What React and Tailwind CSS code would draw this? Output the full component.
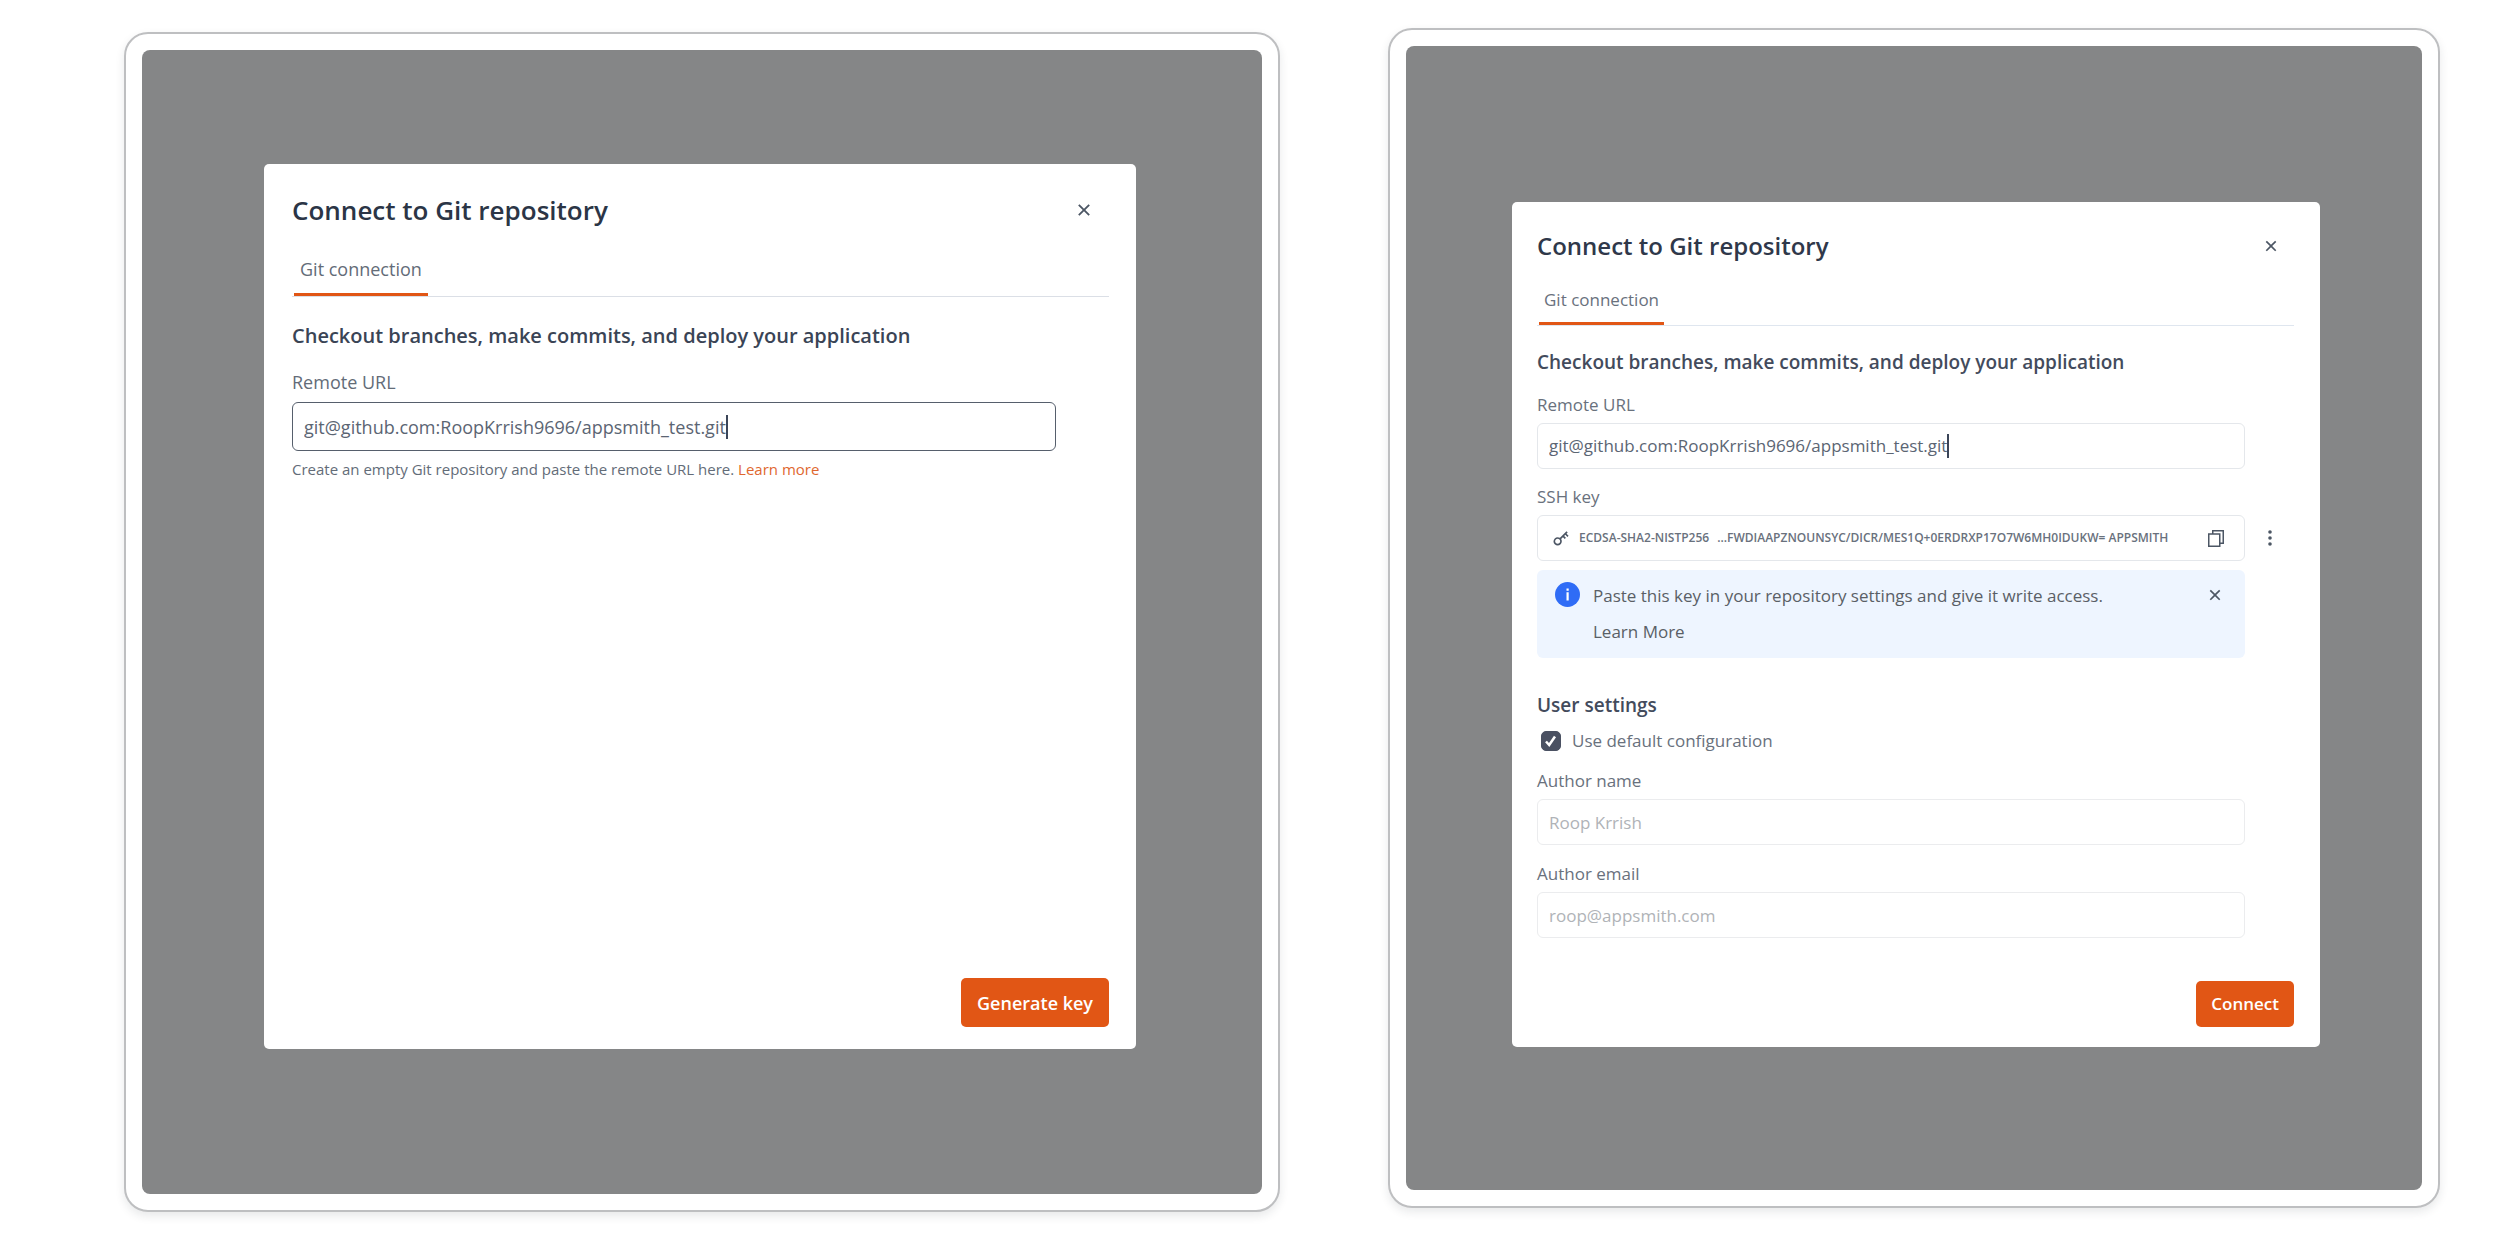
import { RiKey2Line, RiCloseLine } from "react-icons/ri";

function Frame({ className, stageClass, children }) {
  return (
    <section
      className={`rounded-3xl border-2 border-[#bebfc1] bg-white p-4 shadow-[0_4px_10px_rgba(30,35,50,0.10)] ${className}`}
    >
      <div className={`rounded-lg bg-[#858687] ${stageClass}`}>{children}</div>
    </section>
  );
}

function CopyIcon() {
  return (
    <svg viewBox="0 0 16 17" className="h-[17px] w-4" fill="none" stroke="#4c5664" strokeWidth="1.5" aria-hidden="true">
      <path d="M4.75 4V.75h10.5v12.5H12" />
      <path d="M.75 4h11v12.25h-11z" />
    </svg>
  );
}

function MoreIcon() {
  return (
    <svg viewBox="0 0 4 16" className="h-4 w-1" fill="#4c5664" aria-hidden="true">
      <circle cx="2" cy="2" r="1.8" />
      <circle cx="2" cy="8" r="1.8" />
      <circle cx="2" cy="14" r="1.8" />
    </svg>
  );
}

function InfoIcon() {
  return (
    <svg viewBox="0 0 25 25" className="size-[25px] shrink-0" aria-hidden="true">
      <circle cx="12.5" cy="12.5" r="12.5" fill="#2f6cf6" />
      <path d="M11.5 6.5h2.2v2.2h-2.2zM11.5 10.2h2.2v8.4h-2.2z" fill="#fff" />
    </svg>
  );
}

/* Text box whose input hugs its value, so the caret bar sits right after the text. */
function UrlField({ id, className }) {
  return (
    <label htmlFor={id} className={`flex items-center rounded-md border pl-[11px] ${className}`}>
      <input
        id={id}
        type="text"
        defaultValue="git@github.com:RoopKrrish9696/appsmith_test.git"
        aria-label="Remote URL"
        className="field-sizing-content bg-transparent text-[#5b6573] outline-none"
      />
      <span className="h-6 w-[2px] bg-[#3b4558]" />
    </label>
  );
}

function SmallField({ id, label, value }) {
  return (
    <div className="mt-[18px] mr-[49px] flex flex-col gap-[7px]">
      <label htmlFor={id} className="leading-[22px]">{label}</label>
      <input
        id={id}
        type="text"
        disabled
        defaultValue={value}
        className="h-[46px] rounded-md border border-[#ebecee] bg-white px-[11px] text-[#b0b3b7]"
      />
    </div>
  );
}

function GenerateDialog() {
  return (
    <div
      role="dialog"
      aria-labelledby="generate-title"
      className="flex min-h-[885px] flex-col rounded-[5px] bg-white pt-[30px] pr-[27px] pb-[22px] pl-7 text-[18px] leading-6 text-[#636c78]"
    >
      <header className="flex items-center justify-between">
        <h1 id="generate-title" className="text-[26px] leading-8 font-semibold text-[#2b3546]">Connect to Git repository</h1>
        <button type="button" aria-label="Close" className="flex w-[50px] justify-center text-[#4c5664]">
          <RiCloseLine className="size-[22px]" />
        </button>
      </header>
      <div role="tablist" className="mt-[31px] flex border-b border-[#dbdfe6] px-[2px]">
        <button type="button" role="tab" aria-selected="true" className="border-b-3 border-[#e15615] px-[6px] pb-3">
          Git connection
        </button>
      </div>
      <h2 className="mt-[25px] text-[20px] leading-7 font-semibold text-[#3a4455]">
        Checkout branches, make commits, and deploy your application
      </h2>
      <div className="mt-5 mr-[53px] flex flex-col gap-2">
        <label htmlFor="generate-url">Remote URL</label>
        <UrlField id="generate-url" className="h-[49px] border-[#565f6c]" />
        <p className="text-[15px] leading-5">
          Create an empty Git repository and paste the remote URL here.{" "}
          <a href="#learn-more" className="text-[#e0672f]">Learn more</a>
        </p>
      </div>
      <button type="button" className="mt-auto h-[49px] self-end rounded-[5px] bg-[#e15615] px-4 font-semibold text-white">
        Generate key
      </button>
    </div>
  );
}

function ConnectDialog() {
  return (
    <div
      role="dialog"
      aria-labelledby="connect-title"
      className="flex min-h-[845px] flex-col rounded-[5px] bg-white pt-[29px] pr-[26px] pb-5 pl-[25px] text-[17px] leading-[22px] text-[#69717d]"
    >
      <header className="flex items-center justify-between">
        <h1 id="connect-title" className="text-[24px] leading-[30px] font-semibold text-[#2f384a]">Connect to Git repository</h1>
        <button type="button" aria-label="Close" className="flex w-[46px] justify-center text-[#4c5664]">
          <RiCloseLine className="size-5" />
        </button>
      </header>
      <div role="tablist" className="mt-7 flex border-b border-[#dfe6ef] px-[2px]">
        <button type="button" role="tab" aria-selected="true" className="border-b-3 border-[#e15615] px-[5px] pb-[11px]">
          Git connection
        </button>
      </div>
      <h2 className="mt-[23px] text-[19px] leading-[26px] font-semibold text-[#434b5c]">
        Checkout branches, make commits, and deploy your application
      </h2>
      <div className="mt-[19px] mr-[49px] flex flex-col gap-[7px]">
        <label htmlFor="connect-url">Remote URL</label>
        <UrlField id="connect-url" className="h-[46px] border-[#e4e7eb]" />
      </div>
      <p className="mt-[17px]">SSH key</p>
      <div className="mt-[7px] flex items-center">
        <div className="flex h-[46px] flex-1 items-center rounded-md border border-[#e4e7eb] pr-5 pl-[13px] text-[12px] font-semibold">
          <RiKey2Line className="mr-2 size-5 shrink-0 text-[#4c5664]" aria-hidden="true" />
          <span className="mr-2">ECDSA-SHA2-NISTP256</span>
          <span>...FWDIAAPZNOUNSYC/DICR/MES1Q+0ERDRXP17O7W6MH0IDUKW= APPSMITH</span>
          <button type="button" aria-label="Copy SSH key" className="ml-auto">
            <CopyIcon />
          </button>
        </div>
        <button type="button" aria-label="More options" className="flex w-[49px] justify-center">
          <MoreIcon />
        </button>
      </div>
      <div className="mt-[9px] mr-[49px] flex items-start rounded-md bg-[#eef5ff] pt-[15px] pr-5 pb-[15px] pl-[18px] text-[#5a5f66]">
        <div className="-mt-[3px]">
          <InfoIcon />
        </div>
        <div className="ml-[13px] flex flex-1 flex-col items-start gap-[14px]">
          <p>Paste this key in your repository settings and give it write access.</p>
          <a href="#learn-more-ssh">Learn More</a>
        </div>
        <button type="button" aria-label="Dismiss" className="text-[#4c5664]">
          <RiCloseLine className="size-5" />
        </button>
      </div>
      <h2 className="mt-[34px] text-[19px] leading-[26px] font-semibold text-[#434b5c]">User settings</h2>
      <div className="mt-3 flex items-center gap-[11px] pl-1">
        <span className="relative flex size-5">
          <input
            id="default-config"
            type="checkbox"
            defaultChecked
            className="peer size-5 appearance-none rounded-[5px] border border-[#4a5162] checked:bg-[#4a5162]"
          />
          <svg viewBox="0 0 20 20" className="pointer-events-none absolute inset-0 hidden size-5 peer-checked:block" fill="none" stroke="#fff" strokeWidth="2.5" aria-hidden="true">
            <path d="M5 10.5l3.2 3.5L14 5.5" />
          </svg>
        </span>
        <label htmlFor="default-config">Use default configuration</label>
      </div>
      <SmallField id="author-name" label="Author name" value="Roop Krrish" />
      <SmallField id="author-email" label="Author email" value="roop@appsmith.com" />
      <button type="button" className="mt-auto h-[46px] self-end rounded-[5px] bg-[#e15615] px-[15px] font-semibold text-white">
        Connect
      </button>
    </div>
  );
}

export default function App() {
  return (
    <main className="grid min-h-screen grid-cols-[1156fr_1052fr] items-start gap-[108px] bg-white pt-7 pr-[78px] pb-6 pl-[124px] font-['Open_Sans','Noto_Sans',sans-serif]">
      <Frame className="mt-1" stageClass="pt-[114px] pr-[126px] pb-[145px] pl-[122px]">
        <GenerateDialog />
      </Frame>
      <Frame className="" stageClass="pt-[156px] pr-[102px] pb-[143px] pl-[106px]">
        <ConnectDialog />
      </Frame>
    </main>
  );
}
